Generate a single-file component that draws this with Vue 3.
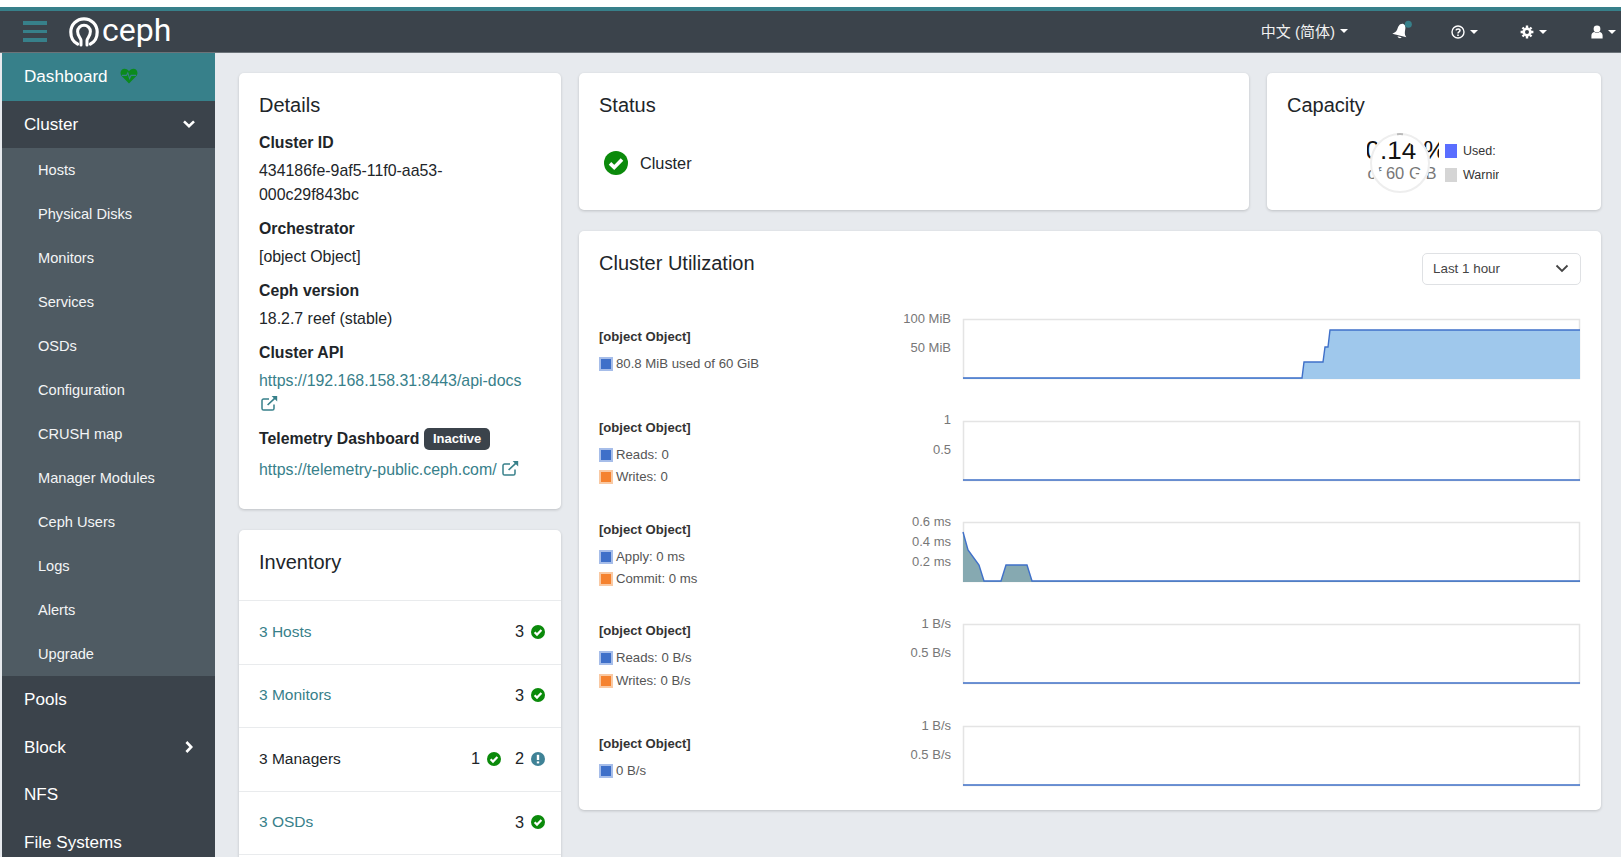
<script setup>
const subItems = ['Hosts','Physical Disks','Monitors','Services','OSDs','Configuration','CRUSH map','Manager Modules','Ceph Users','Logs','Alerts','Upgrade']
const blue = '#3f70c9'
const charts = [
  { legend: [{ c: 'b', t: '80.8 MiB used of 60 GiB' }], ticks: [['100 MiB', 15], ['50 MiB', 44]], fill: '#9fc8ec',
    pts: '82,70 421,70 423,54 442,54 444,39 447,39 449,22 699,22' },
  { legend: [{ c: 'b', t: 'Reads: 0' }, { c: 'o', t: 'Writes: 0' }], ticks: [['1', 14], ['0.5', 44]], fill: 'none',
    pts: '82,70 699,70' },
  { legend: [{ c: 'b', t: 'Apply: 0 ms' }, { c: 'o', t: 'Commit: 0 ms' }], ticks: [['0.6 ms', 15], ['0.4 ms', 35], ['0.2 ms', 55]], fill: '#86a9b1',
    pts: '82,21 87,39 98,54 103,70 120,70 125,54 146,54 151,70 699,70' },
  { legend: [{ c: 'b', t: 'Reads: 0 B/s' }, { c: 'o', t: 'Writes: 0 B/s' }], ticks: [['1 B/s', 15], ['0.5 B/s', 44]], fill: 'none',
    pts: '82,70 699,70' },
  { legend: [{ c: 'b', t: '0 B/s' }], ticks: [['1 B/s', 15], ['0.5 B/s', 44]], fill: 'none',
    pts: '82,70 699,70' }
]
const inventory = [
  { label: '3 Hosts', link: true, stats: [{ n: 3, k: 'ok' }] },
  { label: '3 Monitors', link: true, stats: [{ n: 3, k: 'ok' }] },
  { label: '3 Managers', link: false, stats: [{ n: 1, k: 'ok' }, { n: 2, k: 'info' }] },
  { label: '3 OSDs', link: true, stats: [{ n: 3, k: 'ok' }] }
]
const areaPts = (pts) => `82,71 ${pts} 699,71`
</script>

<template>
  <div class="page">
    <header class="topbar">
      <div class="burger"><i></i><i></i><i></i></div>
      <svg class="logo" viewBox="0 0 30 30" fill="none" stroke="#fff" stroke-linecap="round">
        <path d="M8.6 27 C4 24.8 1.8 20 1.8 15 A13.2 13.2 0 0 1 28.2 15 C28.2 20 26 24.8 21.4 27" stroke-width="3.2" />
        <path d="M12 28 V23.5 C12 21 8.6 19.5 8.6 14.6 A6.4 6.4 0 0 1 21.4 14.6 C21.4 19.5 18 21 18 23.5 V28" stroke-width="3" />
      </svg>
      <span class="brand">ceph</span>
      <nav class="tools">
        <span class="tool lang">中文 (简体)<b class="caret"></b></span>
        <span class="tool bell">
          <svg viewBox="0 0 18 18" width="21" height="21" fill="#fff"><path d="M8 3 C4.5 3.6 4.6 7 4.3 9.3 C4 11.2 2.6 12.6 1.2 13.6 L13.6 13.6 C12.2 12.4 11.4 11 11.2 9.2 C11 7 11.2 3.6 8 3 Z M6 14.6 A2.2 2.2 0 0 0 9.8 14.6 Z" transform="rotate(14 8 9)"/><circle cx="14" cy="3.6" r="3" fill="#37808a"/></svg>
        </span>
        <span class="tool help">
          <svg viewBox="0 0 14 14" width="14" height="14" fill="none" stroke="#fff" stroke-width="1.4"><circle cx="7" cy="7" r="6"/><path d="M5 5.4 C5.2 3.4 9 3.4 9 5.4 C9 6.8 7 6.8 7 8.4" stroke-width="1.5"/><path d="M7 9.6 V11" stroke-width="1.6"/></svg>
          <b class="caret"></b>
        </span>
        <span class="tool gear">
          <svg viewBox="0 0 14 14" width="14" height="14" fill="none" stroke="#fff"><circle cx="7" cy="7" r="3.3" stroke-width="2.6"/><path d="M7 .6 V3 M7 11 V13.4 M.6 7 H3 M11 7 H13.4 M2.5 2.5 L4 4 M10 10 L11.5 11.5 M2.5 11.5 L4 10 M10 4 L11.5 2.5" stroke-width="2.4"/></svg>
          <b class="caret"></b>
        </span>
        <span class="tool user">
          <svg viewBox="0 0 12 14" width="12" height="14" fill="#fff"><circle cx="6" cy="4" r="3.4"/><path d="M.4 13.6 V10.4 C.4 8.4 2 7 3.4 7 C5 8.2 7 8.2 8.6 7 C10 7 11.6 8.4 11.6 10.4 V13.6 Z"/></svg>
          <b class="caret"></b>
        </span>
      </nav>
    </header>

    <div class="shell">
      <aside class="sidebar">
        <div class="item active">
          <span>Dashboard</span>
          <svg class="heart" viewBox="0 0 18 16" width="18" height="16"><path d="M9 15.6 L1.6 8 C-.6 5.4.6 .8 4.6.8 C6.6.8 8 2 9 3.2 C10 2 11.4.8 13.4.8 C17.4.8 18.6 5.4 16.4 8 Z" fill="#0b8a1e"/><path d="M2 7.4 H6.4 L7.8 4.8 L9.6 10.4 L11 7.4 H16" fill="none" stroke="#37808a" stroke-width="1.1"/></svg>
        </div>
        <div class="item dark head">
          <span>Cluster</span>
          <svg class="chev" viewBox="0 0 12 8" width="12" height="8" fill="none" stroke="#fff" stroke-width="2.6"><path d="M1 1.4 L6 6.2 L11 1.4"/></svg>
        </div>
        <div class="sub">
          <div v-for="s in subItems" :key="s" class="sub-item">{{ s }}</div>
        </div>
        <div class="item dark"><span>Pools</span></div>
        <div class="item dark">
          <span>Block</span>
          <svg class="chev side" viewBox="0 0 8 12" width="8" height="12" fill="none" stroke="#fff" stroke-width="2.6"><path d="M1.4 1 L6.2 6 L1.4 11"/></svg>
        </div>
        <div class="item dark"><span>NFS</span></div>
        <div class="item dark"><span>File Systems</span></div>
      </aside>

      <main class="content">
        <div class="col-left">
          <section class="card details">
            <h2>Details</h2>
            <dl>
              <dt>Cluster ID</dt>
              <dd>434186fe-9af5-11f0-aa53-<br>000c29f843bc</dd>
              <dt>Orchestrator</dt>
              <dd>[object Object]</dd>
              <dt>Ceph version</dt>
              <dd>18.2.7 reef (stable)</dd>
              <dt>Cluster API</dt>
              <dd>
                <a>https://192.168.158.31:8443/api-docs</a><br>
                <svg class="ext" viewBox="0 0 17 16" width="17" height="16" fill="none" stroke="#37808a" stroke-width="1.5"><path d="M13 9.5 V13.4 A1.6 1.6 0 0 1 11.4 15 H2.6 A1.6 1.6 0 0 1 1 13.4 V5.6 A1.6 1.6 0 0 1 2.6 4 H8"/><path d="M6.6 10 L15 2.2" stroke-width="1.7"/><path d="M10.6 1 H16.2 V6.4 Z" fill="#37808a" stroke="none"/></svg>
              </dd>
              <dt class="tele">Telemetry Dashboard <span class="badge">Inactive</span></dt>
              <dd class="tele-link">
                <a>https://telemetry-public.ceph.com/</a>
                <svg class="ext" viewBox="0 0 17 16" width="17" height="16" fill="none" stroke="#37808a" stroke-width="1.5"><path d="M13 9.5 V13.4 A1.6 1.6 0 0 1 11.4 15 H2.6 A1.6 1.6 0 0 1 1 13.4 V5.6 A1.6 1.6 0 0 1 2.6 4 H8"/><path d="M6.6 10 L15 2.2" stroke-width="1.7"/><path d="M10.6 1 H16.2 V6.4 Z" fill="#37808a" stroke="none"/></svg>
              </dd>
            </dl>
          </section>

          <section class="card inventory">
            <h2>Inventory</h2>
            <div v-for="r in inventory" :key="r.label" class="inv-row">
              <span :class="{ link: r.link }">{{ r.label }}</span>
              <span class="stats">
                <span v-for="(st, i) in r.stats" :key="i" class="stat">
                  {{ st.n }}
                  <svg v-if="st.k === 'ok'" viewBox="0 0 14 14" width="14" height="14"><circle cx="7" cy="7" r="7" fill="#0b8a0b"/><path d="M3.6 7.2 L6 9.6 L10.4 5" fill="none" stroke="#fff" stroke-width="2.2"/></svg>
                  <svg v-else viewBox="0 0 14 14" width="14" height="14"><circle cx="7" cy="7" r="7" fill="#3f8296"/><path d="M7 2.8 V8" stroke="#fff" stroke-width="2.4"/><path d="M7 9.4 V11.4" stroke="#fff" stroke-width="2.4"/></svg>
                </span>
              </span>
            </div>
            <div class="inv-row"></div>
          </section>
        </div>

        <div class="col-right">
          <div class="top-row">
            <section class="card status">
              <h2>Status</h2>
              <div class="status-line">
                <svg viewBox="0 0 24 24" width="24" height="24"><circle cx="12" cy="12" r="12" fill="#0b8a0b"/><path d="M6 12.4 L10.2 16.4 L18 8.4" fill="none" stroke="#fff" stroke-width="3.6"/></svg>
                <span>Cluster</span>
              </div>
            </section>
            <section class="card capacity">
              <h2>Capacity</h2>
              <div class="cap-body">
                <div class="gauge">
                  <div class="gauge-text">
                    <div class="pct">0.14 %</div>
                    <div class="of">of 60 GiB</div>
                  </div>
                  <svg class="ring" viewBox="0 0 72 64" width="72" height="64" fill="none">
                    <circle cx="33" cy="32" r="26" stroke="#fff" stroke-width="8"/>
                    <circle cx="33" cy="32" r="29" stroke="#eeeeee" stroke-width="2"/>
                    <path d="M30 3.2 A29 29 0 0 1 36 3.2" stroke="#bbb" stroke-width="2"/>
                  </svg>
                </div>
                <div class="cap-legend">
                  <div><i class="sw used"></i>Used:</div>
                  <div><i class="sw warn"></i>Warning: 70%</div>
                </div>
              </div>
            </section>
          </div>

          <section class="card util">
            <div class="util-head">
              <h2>Cluster Utilization</h2>
              <div class="select">
                <span>Last 1 hour</span>
                <svg viewBox="0 0 14 9" width="14" height="9" fill="none" stroke="#444" stroke-width="1.8"><path d="M1.5 1.5 L7 7 L12.5 1.5"/></svg>
              </div>
            </div>
            <div class="rows">
              <div v-for="(c, i) in charts" :key="i" class="chart-row">
                <div class="legend">
                  <div class="legend-title">[object Object]</div>
                  <div v-for="l in c.legend" :key="l.t" class="legend-item">
                    <i class="swatch" :class="l.c"></i>{{ l.t }}
                  </div>
                </div>
                <svg class="chart" viewBox="0 0 700 82" width="700" height="82">
                  <text v-for="t in c.ticks" :key="t[0]" class="tick" x="70" :y="t[1]" text-anchor="end">{{ t[0] }}</text>
                  <rect x="82.5" y="11.5" width="616" height="59" fill="#fff" stroke="#e4e4e4" stroke-width="1.5"/>
                  <polygon v-if="c.fill !== 'none'" :points="areaPts(c.pts)" :fill="c.fill"/>
                  <polyline :points="c.pts" fill="none" :stroke="blue" stroke-width="1.4"/>
                </svg>
              </div>
            </div>
          </section>
        </div>
      </main>
    </div>
  </div>
</template>

<style>
html, body { margin: 0; background: #fff; overflow: hidden; }
</style>

<style scoped>
.page { width: 1621px; height: 857px; padding-top: 7px; box-sizing: border-box; display: flex; flex-direction: column; overflow: hidden; font-family: "Liberation Sans", Arial, sans-serif; color: #212529; font-size: 16.5px; }
.topbar { height: 46px; flex: none; box-sizing: border-box; background: #3b434b; border-top: 4px solid #37808a; border-bottom: 1px solid #6c7379; display: flex; align-items: center; padding-left: 23px; }
.burger { width: 24px; display: flex; flex-direction: column; gap: 5px; margin-right: 22px; }
.burger i { display: block; height: 3.5px; background: #37808a; }
.logo { width: 30px; height: 30px; flex: none; }
.brand { font-family: Roboto, "Liberation Sans", sans-serif; font-weight: 400; font-size: 32px; color: #fff; margin-left: 3px; line-height: 1; margin-top: -3px; }
.tools { margin-left: auto; display: flex; align-items: center; color: #fff; font-size: 15px; padding-right: 5px; }
.tool { display: flex; align-items: center; font-family: "Liberation Sans", "Noto Sans CJK SC", sans-serif; }
.lang { margin-right: 44px; color: #f1f1f1; margin-top: -2px; }
.bell { margin-right: 38px; margin-top: -2px; }
.help { margin-right: 42px; }
.gear { margin-right: 44px; }
.caret { display: inline-block; width: 0; height: 0; border-left: 4px solid transparent; border-right: 4px solid transparent; border-top: 4px solid #fff; margin-left: 5px; margin-top: 1px; }
.user { margin-right: 0; }

.shell { flex: 1; display: flex; min-height: 0; background: #e7eaee; }
.sidebar { width: 213px; margin-left: 2px; flex: none; background: #3b434b; overflow: hidden; color: #fff; font-size: 17.1px; }
.item { height: 47.7px; display: flex; align-items: center; padding: 0 20px 0 22px; position: relative; }
.item.head { height: 47px; }
.item.active { height: 48px; background: #37808a; }
.heart { margin-left: 12px; margin-top: -2px; }
.chev { margin-left: auto; margin-right: 0; margin-top: -2px; }
.chev.side { margin-right: 2px; }
.sub { background: #4f5b63; }
.sub-item { height: 44px; display: flex; align-items: center; padding-left: 36px; font-size: 14.6px; color: #f4f5f6; }

.content { flex: 1; min-width: 0; display: flex; gap: 18px; padding: 20px 20px 0 24px; overflow: hidden; }
.col-left { width: 322px; flex: none; display: flex; flex-direction: column; gap: 21px; }
.col-right { flex: 1; min-width: 0; display: flex; flex-direction: column; gap: 21px; }
.top-row { display: flex; gap: 18px; }
.card { background: #fff; border-radius: 5px; box-shadow: 0 1px 3px rgba(0,0,0,.18); flex: none; }
h2 { margin: 0; font-weight: 400; font-size: 20px; line-height: 24px; color: #212529; }

.details { padding: 20px 20px 0 20px; height: 436px; box-sizing: border-box; }
dl { margin: 14px 0 0; }
dt { font-weight: 700; font-size: 15.8px; line-height: 24px; margin-bottom: 4px; }
dd { margin: 0 0 10px; line-height: 24px; font-size: 15.9px; }
a { color: #37808a; }
.ext { vertical-align: -1px; margin-left: 2px; }
.tele { display: flex; align-items: center; gap: 5px; }
.tele-link { margin-top: 7px; }
.tele-link .ext { margin-left: 5px; }
.badge { background: #3b434b; color: #fff; font-size: 13px; line-height: 22px; padding: 0 8.5px; border-radius: 5px; font-weight: 700; }

.inventory { padding-top: 20px; }
.inventory h2 { padding: 0 20px; height: 50px; }
.inv-row { height: 63.5px; box-sizing: border-box; border-top: 1.5px solid #e9ebed; display: flex; align-items: center; justify-content: space-between; padding: 0 16px 1px 20px; font-size: 15.5px; }
.link { color: #37808a; }
.stats { display: flex; gap: 14px; font-size: 16.3px; }
.stat { display: flex; align-items: center; gap: 7px; }

.status { flex: 1; height: 137px; padding: 20px; box-sizing: border-box; }
.status-line { display: flex; align-items: center; gap: 12px; margin-top: 34px; padding-left: 5px; font-size: 16.3px; }
.capacity { width: 334px; height: 137px; padding: 20px; box-sizing: border-box; }
.cap-body { display: flex; margin-top: 14px; margin-left: 80px; }
.gauge { width: 72px; height: 64px; position: relative; overflow: hidden; flex: none; }
.gauge-text { position: absolute; left: -11px; width: 100px; top: 4px; text-align: center; }
.pct { font-size: 26px; line-height: 30px; color: #111; }
.of { font-size: 16.5px; line-height: 18px; color: #777; margin-top: -1px; margin-left: -8px; }
.ring { position: absolute; left: 0; top: 0; }
.cap-legend { width: 54px; overflow: hidden; white-space: nowrap; font-size: 12.5px; margin-left: 6px; margin-top: 8px; color: #333; }
.cap-legend div { height: 24px; display: flex; align-items: center; }
.sw { width: 12px; height: 14px; margin-right: 6px; flex: none; }
.used { background: #5a6eff; }
.warn { background: #d5d5d5; }

.util { height: 579px; padding: 20px 20px 0; box-sizing: border-box; }
.util-head { display: flex; justify-content: space-between; align-items: flex-start; height: 47px; }
.select { width: 159px; height: 32px; box-sizing: border-box; border: 1px solid #dfe1e4; border-radius: 5px; display: flex; align-items: center; justify-content: space-between; padding: 0 11px 2px 10px; font-size: 13.4px; color: #444; margin-top: 2px; margin-right: 0; }
.chart-row { height: 101.75px; display: flex; align-items: center; justify-content: space-between; }
.legend { color: #555; font-size: 13.2px; margin-top: 4px; }
.legend-title { font-weight: 700; color: #333; font-size: 13.1px; line-height: 16px; margin-bottom: 11px; }
.legend-item { display: flex; align-items: center; line-height: 16px; height: 16px; margin-bottom: 6.5px; }
.legend-item:last-child { margin-bottom: 0; }
.swatch { width: 10px; height: 10px; border: 2px solid; margin-right: 3px; flex: none; }
.swatch.b { background: #3f70c9; border-color: #a6bde9; }
.swatch.o { background: #f5822f; border-color: #f9c9a3; }
.chart { flex: none; display: block; margin-right: 0; }
.tick { font-size: 13px; fill: #777; font-family: "Liberation Sans", Arial, sans-serif; }
</style>
